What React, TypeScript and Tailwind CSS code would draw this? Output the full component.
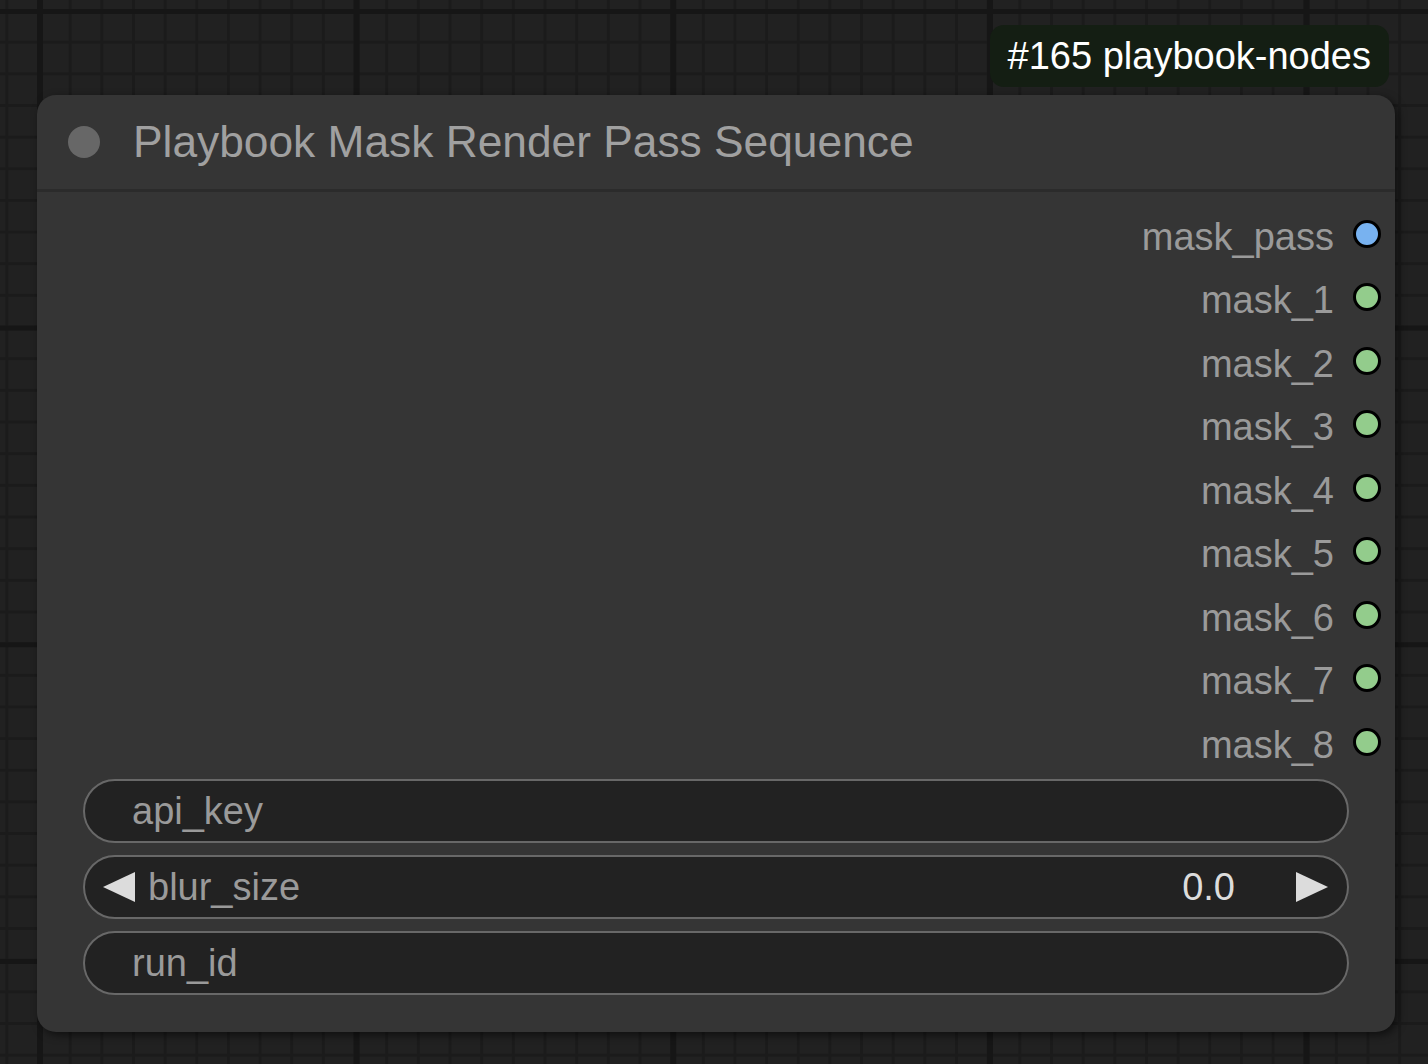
import React from "react";

const outputs = [
  { name: "mask_pass", color: "bg-[#78b2f0]" },
  { name: "mask_1", color: "bg-[#93cc8c]" },
  { name: "mask_2", color: "bg-[#93cc8c]" },
  { name: "mask_3", color: "bg-[#93cc8c]" },
  { name: "mask_4", color: "bg-[#93cc8c]" },
  { name: "mask_5", color: "bg-[#93cc8c]" },
  { name: "mask_6", color: "bg-[#93cc8c]" },
  { name: "mask_7", color: "bg-[#93cc8c]" },
  { name: "mask_8", color: "bg-[#93cc8c]" },
];

function LeftArrow() {
  return (
    <svg width="32" height="32" viewBox="0 0 32 32" className="shrink-0">
      <polygon points="0,16 32,1 32,31" fill="#dcdcdc" />
    </svg>
  );
}

function RightArrow() {
  return (
    <svg width="32" height="32" viewBox="0 0 32 32" className="shrink-0">
      <polygon points="32,16 0,1 0,31" fill="#dcdcdc" />
    </svg>
  );
}

export default function App() {
  return (
    <div
      className="relative w-[1428px] h-[1064px] overflow-hidden bg-[#212121] bg-[image:linear-gradient(90deg,#161616_6px,transparent_6px),linear-gradient(180deg,#161616_5px,transparent_5px),linear-gradient(90deg,#1b1b1b_3px,transparent_3px),linear-gradient(180deg,#1b1b1b_3px,transparent_3px)] [background-size:316.67px_316.67px,316.67px_316.67px,31.667px_31.667px,31.667px_31.667px] [background-position:37px_9px,37px_9px,37px_9px,37px_9px]"
      style={{ fontFamily: '"Liberation Sans", Arial, Helvetica, sans-serif' }}
    >
      <div className="pl-[37px] pt-[95px]">
        <div className="relative w-[1358px] h-[937px] rounded-[19px] bg-[#353535] shadow-[3px_3px_8px_rgba(0,0,0,0.55)]">
          {/* badge */}
          <div className="absolute top-[-70px] right-[6px] h-[62px] px-[18px] flex items-center rounded-[14px] bg-[#141e13] text-white text-[38px] leading-none whitespace-nowrap">
            #165 playbook-nodes
          </div>

          {/* title */}
          <div className="h-[97px] flex items-center pl-[31px] border-b-[3px] border-[#2b2b2b]">
            <div className="w-8 h-8 rounded-full bg-[#676767]" />
            <div className="ml-[33px] text-[44.3px] text-[#a0a0a0] leading-none whitespace-nowrap">
              Playbook Mask Render Pass Sequence
            </div>
          </div>

          {/* outputs */}
          <div className="pt-[10px] flex flex-col">
            {outputs.map((o) => (
              <div key={o.name} className="h-[63.5px] flex items-center justify-end pr-[14px]">
                <span className="text-[38px] text-[#9a9a9a] leading-none mt-[6px]">{o.name}</span>
                <div className={`ml-[19px] w-[28px] h-[28px] rounded-full border-[3px] border-black ${o.color}`} />
              </div>
            ))}
          </div>

          {/* widgets */}
          <div className="mt-[5px] px-[46px] flex flex-col gap-3">
            <div className="h-16 rounded-full border-2 border-[#686868] bg-[#222222] flex items-center pl-[47px]">
              <span className="text-[38px] text-[#9a9a9a] leading-none">api_key</span>
            </div>
            <div className="h-16 rounded-full border-2 border-[#686868] bg-[#222222] flex items-center pl-[18px] pr-[19px]">
              <LeftArrow />
              <span className="ml-[13px] text-[38px] text-[#9a9a9a] leading-none">blur_size</span>
              <span className="ml-auto text-[38px] text-[#dcdcdc] leading-none">0.0</span>
              <div className="ml-[61px]">
                <RightArrow />
              </div>
            </div>
            <div className="h-16 rounded-full border-2 border-[#686868] bg-[#222222] flex items-center pl-[47px]">
              <span className="text-[38px] text-[#9a9a9a] leading-none">run_id</span>
            </div>
          </div>
        </div>
      </div>
    </div>
  );
}
